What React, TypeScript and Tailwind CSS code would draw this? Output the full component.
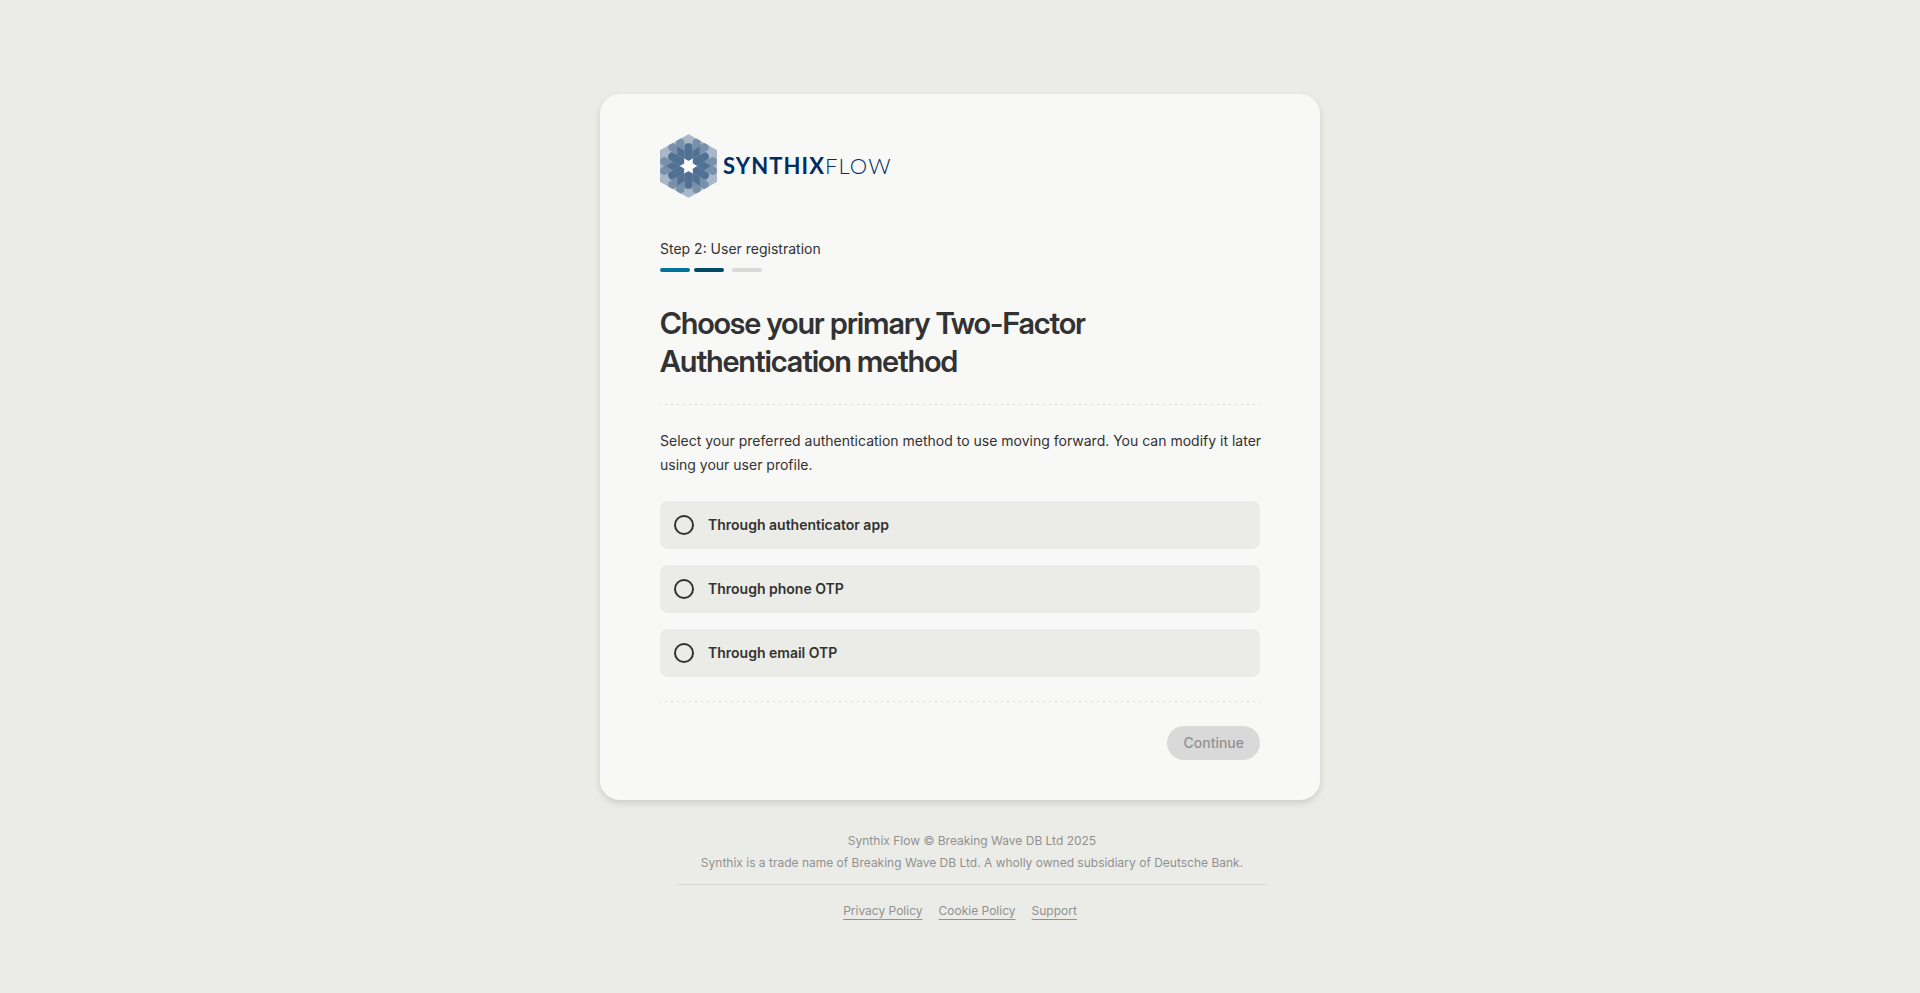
import { useState } from 'react'

const METHODS = [
  { id: 'app', label: 'Through authenticator app' },
  { id: 'phone', label: 'Through phone OTP' },
  { id: 'email', label: 'Through email OTP' },
]

const LINKS = ['Privacy Policy', 'Cookie Policy', 'Support']

const PETAL_ANGLES = [0, 60, 120, 180, 240, 300]

function LogoMark() {
  return (
    <svg width="57" height="64" viewBox="0 0 57 64" aria-hidden="true">
      <defs>
        <clipPath id="hexagon">
          <path d="M28.5 0L57 16V48L28.5 64L0 48V16Z" />
        </clipPath>
      </defs>
      <g clipPath="url(#hexagon)">
        <path fill="#a9b8c9" d="M28.5 0L57 16V48L28.5 64L0 48V16Z" />
        <g fill="#7890aa">
          <circle cx="28.5" cy="32" r="17" />
          {PETAL_ANGLES.map((angle) => (
            <g key={angle} transform={`rotate(${angle} 28.5 32)`}>
              <path d="M16.3 8Q16.3 6.4 17.6 5.6L19.2 4.6Q20.4 4 21.6 4.7L23.4 5.8Q24.5 6.6 24.5 8V24H16.3Z" />
              <path d="M40.7 8Q40.7 6.4 39.4 5.6L37.8 4.6Q36.6 4 35.4 4.7L33.6 5.8Q32.5 6.6 32.5 8V24H40.7Z" />
            </g>
          ))}
        </g>
        <g fill="#507193">
          {PETAL_ANGLES.map((angle) => (
            <g key={angle} transform={`rotate(${angle} 28.5 32)`}>
              <rect x="24.6" y="9.2" width="7.8" height="17" rx="3.4" />
              {/* overlap of neighbouring petals, on the axis between two corners */}
              <path d="M6 32L13 28.1L20 32L13 35.9Z" />
            </g>
          ))}
        </g>
      </g>
      <path
        fill="#ffffff"
        d="M37.2 32L32.7 34.4L32.8 39.5L28.5 36.9L24.2 39.5L24.3 34.4L19.8 32L24.3 29.6L24.2 24.5L28.5 27.1L32.8 24.5L32.7 29.6Z"
      />
    </svg>
  )
}

function Logo() {
  return (
    <div className="flex items-center gap-1.5">
      <LogoMark />
      <p className="font-[Lato,sans-serif] text-[22px] leading-8 tracking-wider text-[#002d62]">
        <span className="font-bold">SYNTHIX</span>
        <span className="font-light">FLOW</span>
      </p>
    </div>
  )
}

function DashedDivider() {
  return (
    <div className="h-px bg-[repeating-linear-gradient(90deg,#d9d9d9_0_1px,transparent_1px_5px,#d9d9d9_5px_6px)]" />
  )
}

export default function App() {
  const [method, setMethod] = useState('')

  return (
    <div className="flex min-h-screen flex-col items-center bg-[#ebece7] px-4 pt-[94px] pb-16 font-[Inter,sans-serif] text-[#323232]">
      <main className="w-full max-w-[720px] rounded-[20px] bg-[#f8f8f6] px-[60px] py-10 shadow-[0_3px_6px_rgba(0,0,0,0.13)]">
        <Logo />

        <p className="mt-10 text-sm leading-[22px]">Step 2: User registration</p>
        <div className="mt-2 flex gap-1">
          <span className="h-1 w-[30px] rounded-full bg-[#00739b]" />
          <span className="mr-1 h-1 w-[30px] rounded-full bg-[#004b64]" />
          <span className="h-1 w-[30px] rounded-full bg-[#d9d9d9]" />
        </div>

        <h1 className="mt-8 mb-6 max-w-[480px] font-['Inter_Display',Inter,sans-serif] text-[30px] leading-[38px] font-semibold tracking-tight">
          Choose your primary Two-Factor Authentication method
        </h1>
        <DashedDivider />

        <form onSubmit={(e) => e.preventDefault()}>
          <p className="my-6 -mr-4 text-sm leading-6">
            Select your preferred authentication method to use moving forward. You can modify it later using your user
            profile.
          </p>
          <div className="mb-6 flex flex-col gap-4">
            {METHODS.map(({ id, label }) => (
              <label
                key={id}
                htmlFor={id}
                className="flex h-12 cursor-pointer items-center gap-3.5 rounded-lg bg-[#ebece7] px-3.5 text-sm font-semibold"
              >
                <input
                  id={id}
                  type="radio"
                  name="method"
                  value={id}
                  checked={method === id}
                  onChange={() => setMethod(id)}
                  className="size-5 appearance-none rounded-full border-2 border-[#323232] checked:border-[6px]"
                />
                {label}
              </label>
            ))}
          </div>
          <DashedDivider />
          <div className="mt-6 flex justify-end">
            <button
              type="submit"
              disabled={!method}
              className="rounded-full bg-[#004b64] px-4 py-[7px] text-sm leading-5 font-medium text-white disabled:bg-[#d9d9d9] disabled:text-[#919191]"
            >
              Continue
            </button>
          </div>
        </form>
      </main>

      <footer className="mt-[30px] text-xs text-[#919191]">
        <div className="ml-6 border-b border-[#d5d6d2] px-6 pb-2.5 text-center leading-[22px]">
          <p>Synthix Flow © Breaking Wave DB Ltd 2025</p>
          <p>Synthix is a trade name of Breaking Wave DB Ltd. A wholly owned subsidiary of Deutsche Bank.</p>
        </div>
        <nav className="mt-4 flex justify-center gap-4 leading-5">
          {LINKS.map((link) => (
            <a key={link} href="#" className="underline underline-offset-4">
              {link}
            </a>
          ))}
        </nav>
      </footer>
    </div>
  )
}
